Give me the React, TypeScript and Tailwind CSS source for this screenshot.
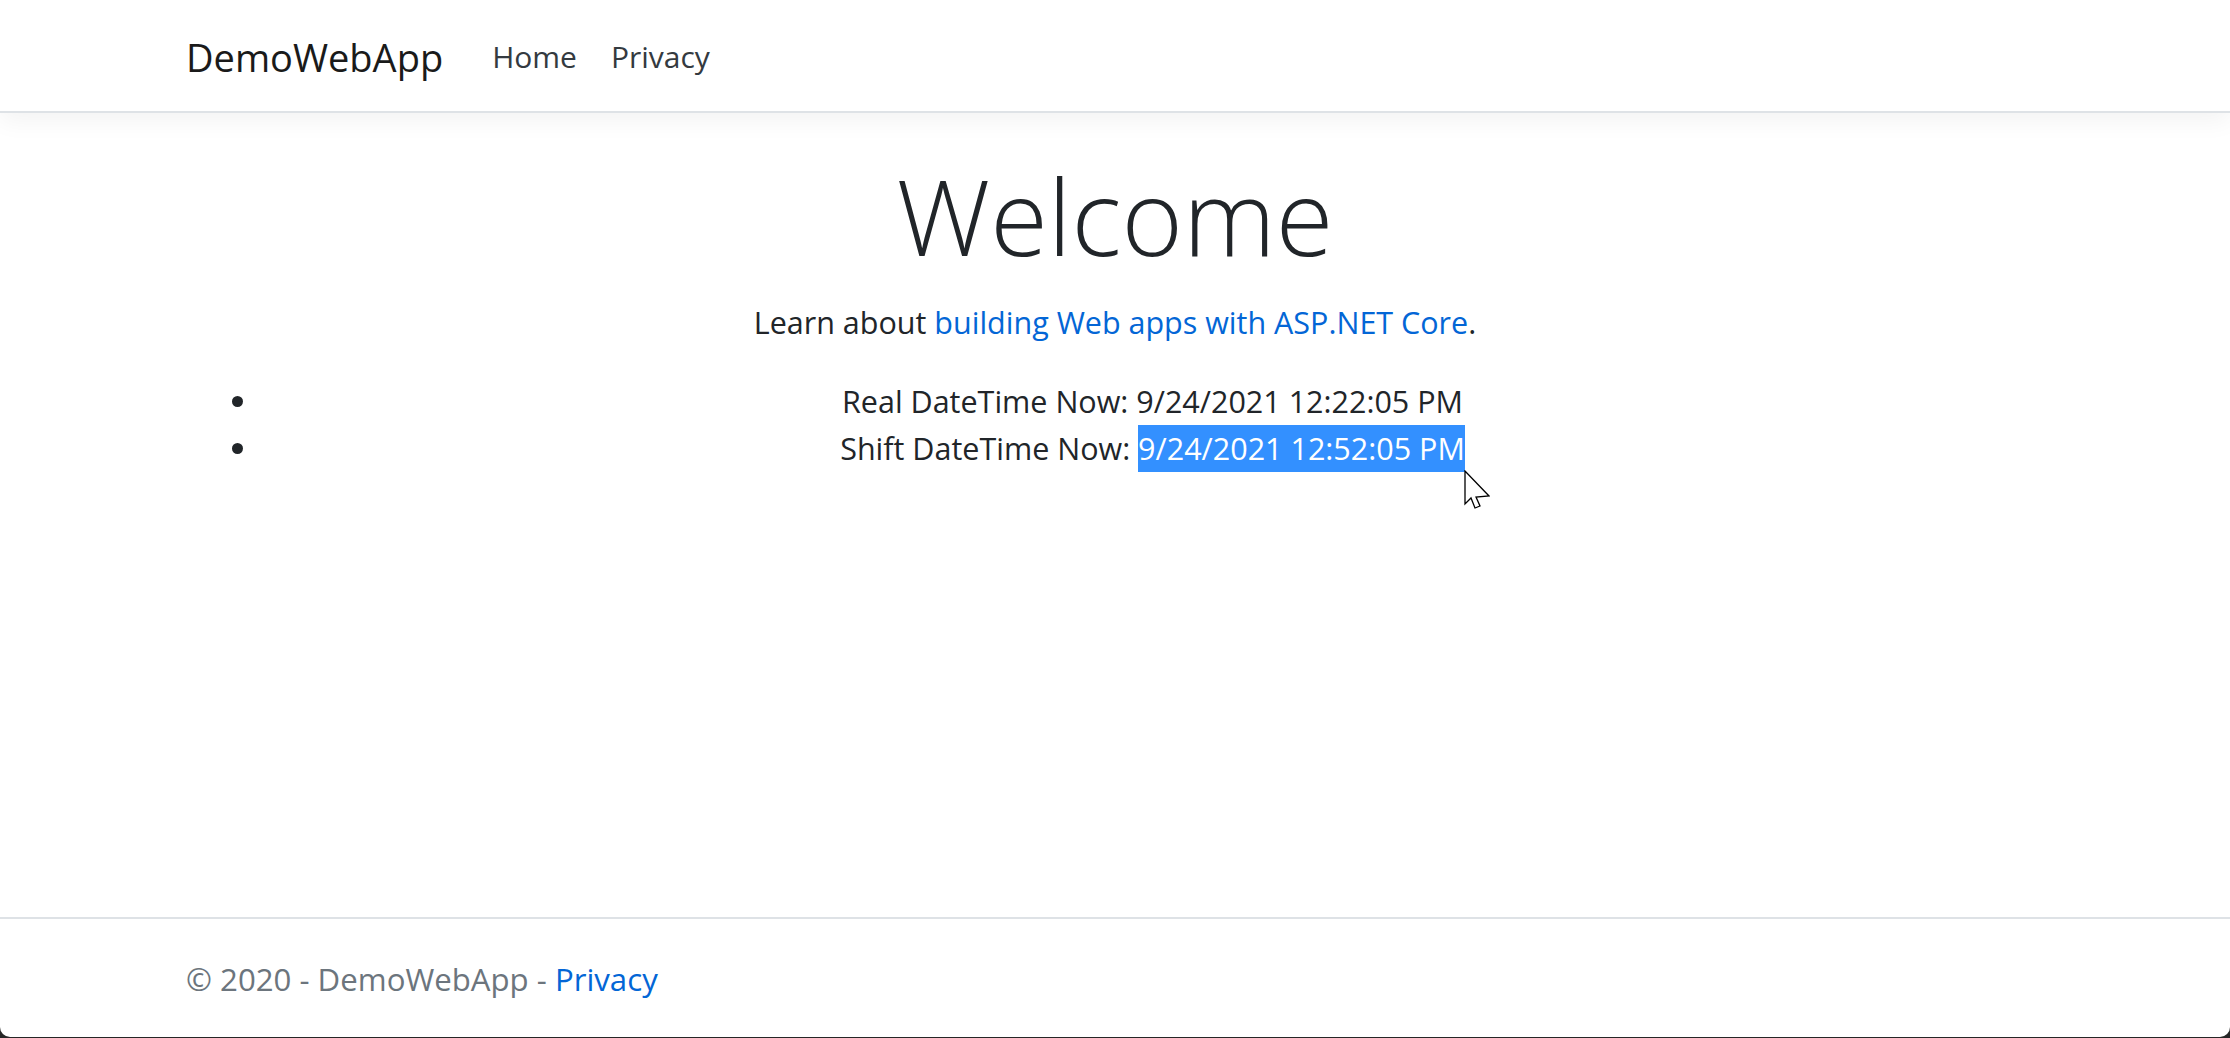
import React from "react";

export default function App() {
  const font = { fontFamily: '"Open Sans", "Noto Sans", sans-serif' };
  return (
    <div className="w-full h-[1038px] bg-[#262626]" style={font}>
      <div className="h-[1037px] bg-white rounded-b-[10px] overflow-hidden flex flex-col text-[#212529]">
        <header className="relative z-10 h-[113px] shrink-0 bg-white border-b-2 border-[#dee2e6] shadow-[0_8px_23px_rgba(0,0,0,0.05)] flex items-center px-[186px] pt-[3px]">
          <a className="text-[38px] text-[#1a1a1a] leading-none mr-[49px]">DemoWebApp</a>
          <nav className="flex items-center gap-[34px] text-[30px] leading-none text-[#343a40]">
            <a>Home</a>
            <a>Privacy</a>
          </nav>
        </header>
        <main className="flex-1 px-[186px]">
          <div className="text-center">
            <h1 className="mt-[38px] text-[105px] font-light leading-[130px] text-[#212529]">Welcome</h1>
            <p className="mt-[18px] text-[30.5px] leading-[47px]">
              Learn about <a className="text-[#0366d6]">building Web apps with ASP.NET Core</a>.
            </p>
            <ul className="mt-[32px] list-disc pl-[75px] text-[30.5px] leading-[47px]">
              <li>Real DateTime Now: 9/24/2021 12:22:05 PM</li>
              <li>
                Shift DateTime Now:{" "}
                <span className="relative inline-block bg-[#3390ff] text-white">
                  9/24/2021 12:52:05 PM
                  <svg
                    className="absolute left-full top-full -ml-[1px] -mt-[2px]"
                    width="26"
                    height="40"
                    viewBox="0 0 26 40"
                  >
                    <polygon
                      points="1,1 1,34 7,28 11,38 16,36 12,27 25,26"
                      fill="#ffffff"
                      stroke="#000000"
                      strokeWidth="1.3"
                      strokeLinejoin="miter"
                    />
                  </svg>
                </span>
              </li>
            </ul>
          </div>
        </main>
        <footer className="shrink-0 h-[120px] border-t-2 border-[#dee2e6] px-[186px] pt-[37px] text-[31.2px] leading-[47px] text-[#6c757d]">
          © 2020 - DemoWebApp - <a className="text-[#0366d6]">Privacy</a>
        </footer>
      </div>
    </div>
  );
}
